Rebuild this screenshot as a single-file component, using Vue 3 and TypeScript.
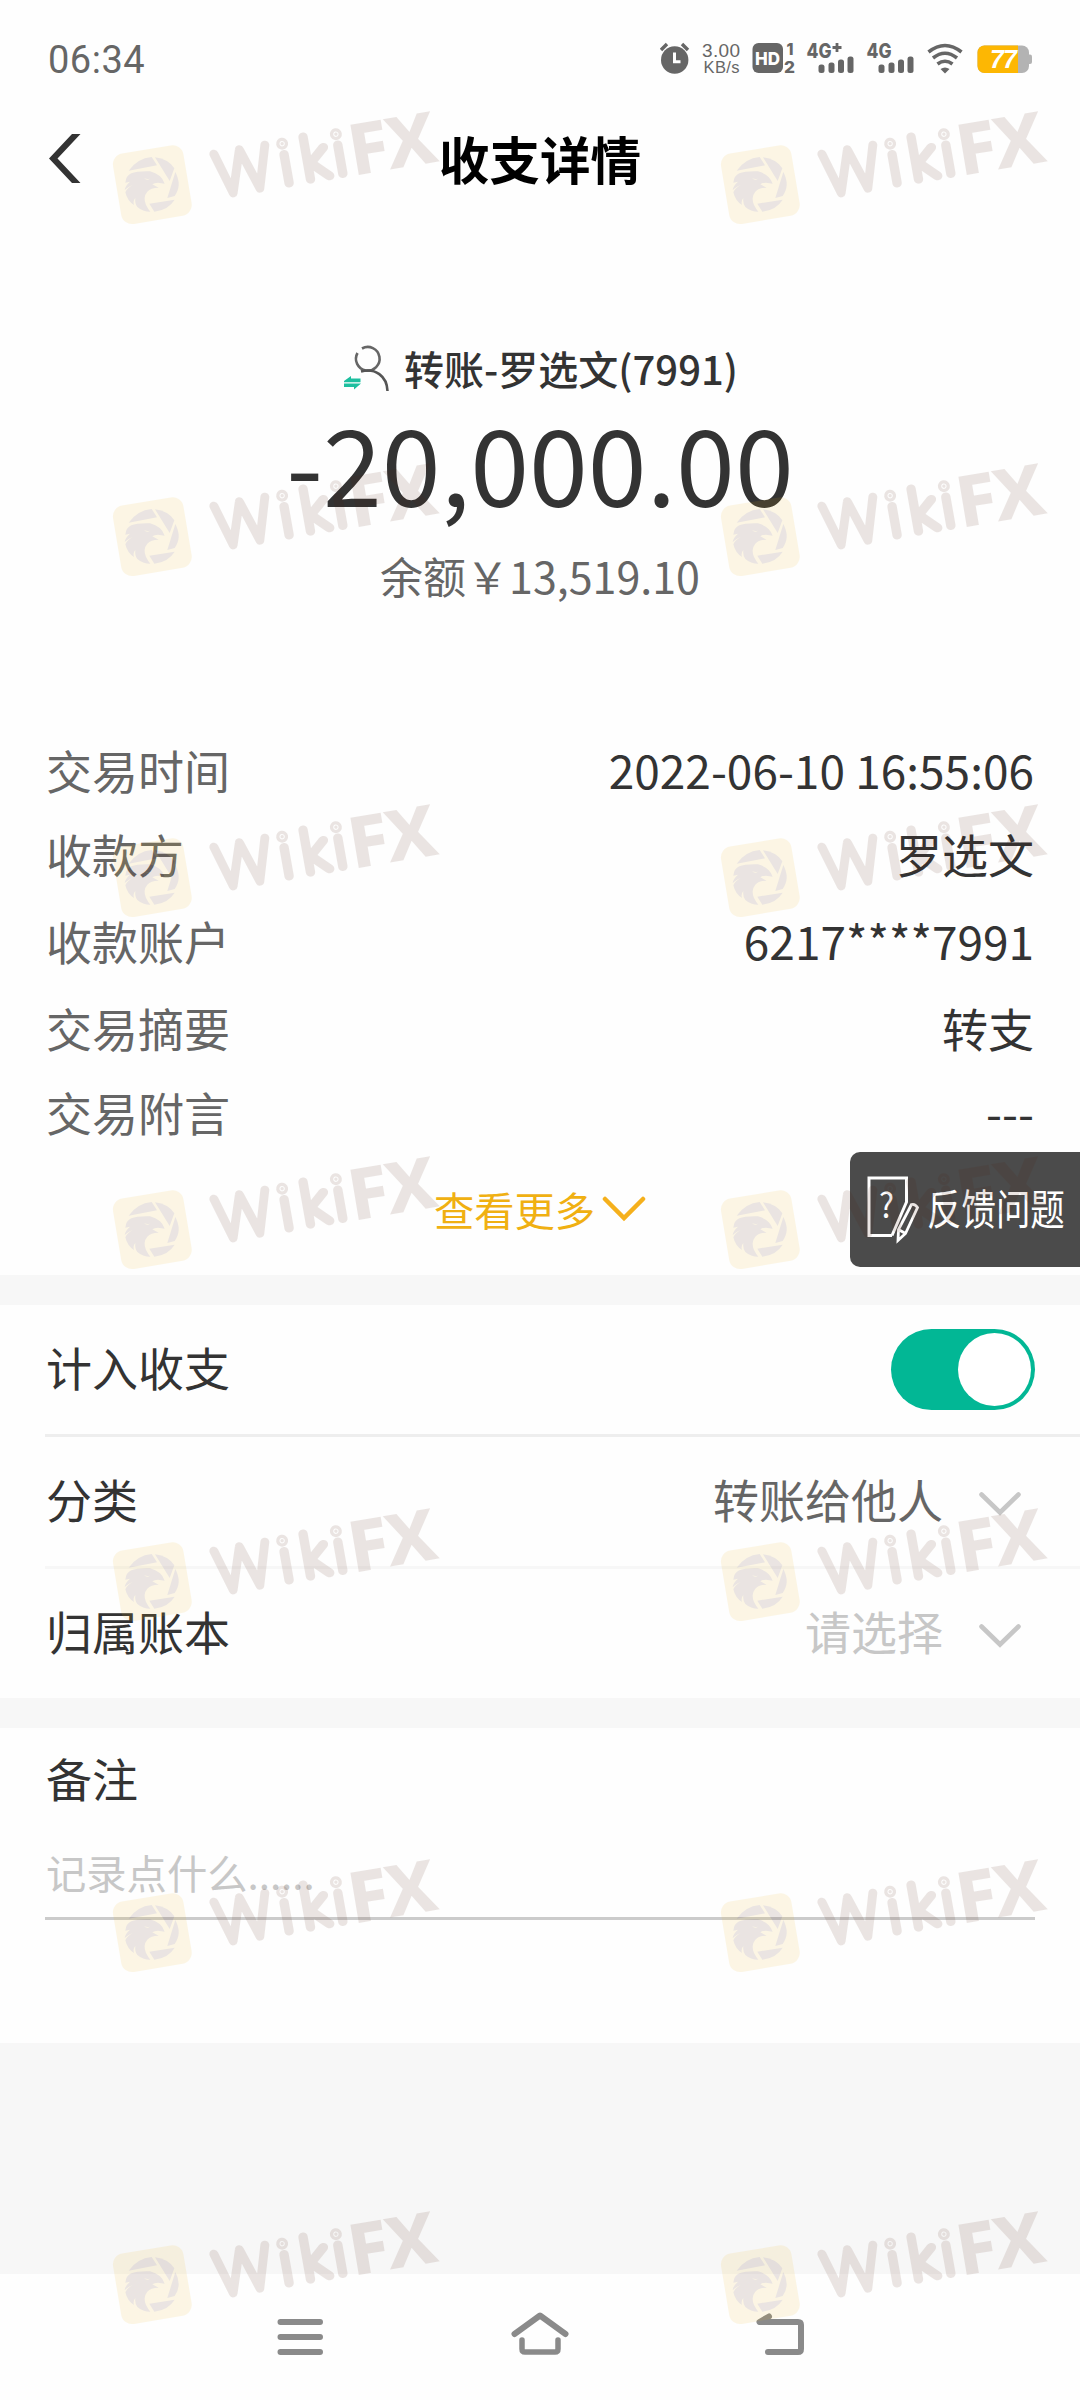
<template>
  <div class="page">
    <div class="status-bar">
      <span class="clock">06:34</span>
      <!-- alarm, speed, network and battery -->
      <svg class="status-icons" viewBox="0 0 400 46" width="400" height="46">
        <g fill="#666">
          <circle cx="14.7" cy="25" r="13.7" />
          <path d="M1 15l6-6M28 15l-6-6" stroke="#666" stroke-width="3.4" />
          <path d="M14.5 17.5v9.3h6" fill="none" stroke="#fff" stroke-width="3" />
          <text x="42" y="21.5" class="speed" textLength="38">3.00</text>
          <text x="43.5" y="37.5" class="unit" textLength="36">KB/s</text>
          <rect x="92.5" y="8" width="30.5" height="30" rx="6" />
          <text x="95" y="29.5" class="hd" textLength="25" lengthAdjust="spacingAndGlyphs">HD</text>
          <text x="126.5" y="20" class="sim" textLength="7" lengthAdjust="spacingAndGlyphs">1</text>
          <text x="124" y="37.5" class="sim" textLength="11" lengthAdjust="spacingAndGlyphs">2</text>
          <text x="146.5" y="22.5" class="net" textLength="25" lengthAdjust="spacingAndGlyphs">4G</text>
          <path d="M177 8v9M172.5 12.5h9" stroke="#666" stroke-width="2.8" />
          <text x="206.5" y="22.5" class="net" textLength="25" lengthAdjust="spacingAndGlyphs">4G</text>
          <g v-for="x in [158.5, 218.5]" :key="x">
            <rect :x="x" y="29.5" width="6" height="8.5" rx="2.5" />
            <rect :x="x + 10" y="27.5" width="6" height="10.5" rx="2.5" />
            <rect :x="x + 19.5" y="24.5" width="6" height="13.5" rx="2.5" />
            <rect :x="x + 29" y="21.5" width="6" height="16.5" rx="2.5" />
          </g>
          <path d="M280.5 34q4.5-3 9 0l-4.5 4.5z" />
          <g fill="none" stroke="#666" stroke-width="3.6">
            <path d="M268.5 17q16.5-13 33 0" />
            <path d="M273 23q12-9.5 24 0" />
            <path d="M277.5 29q7.5-5.5 15 0" />
          </g>
        </g>
        <rect x="317.5" y="10.5" width="51.5" height="27.5" rx="7" fill="#b3b3b3" />
        <rect x="367" y="19.5" width="5" height="9.5" rx="2" fill="#b3b3b3" />
        <path d="M324.5 10.5H358V38h-33.5a7 7 0 0 1-7-7V17.5a7 7 0 0 1 7-7z" fill="#fdb703" />
        <text x="330" y="33" class="level" textLength="27">77</text>
      </svg>
    </div>

    <header class="nav">
      <svg class="back" viewBox="0 0 32 50" width="32" height="50">
        <path d="M23 0h8.5L8.5 24.500 31.5 49H23L0 24.500z" fill="#333" />
      </svg>
      <h1>收支详情</h1>
    </header>

    <section class="summary">
      <div class="payee">
        <svg viewBox="0 0 46 48" width="46" height="48" fill="none">
          <path d="M18 4.500a11.800 11.800 0 1 1-4.500 4.500" stroke="#666" stroke-width="2.6" />
          <path d="M17 27.500C31 23.500 43 32 43.500 47" stroke="#555" stroke-width="2.6" />
          <path d="M0 37l7-5v2.500h9.500v3.800H0zM17 39.500l-7 6V43H0v-3.500z" fill="#1dbf9f" />
        </svg>
        <span>转账-罗选文(7991)</span>
      </div>
      <div class="amount">-20,000.00</div>
      <div class="balance">余额￥13,519.10</div>
    </section>

    <section class="details">
      <div v-for="item in details" :key="item.label" class="detail">
        <span class="label">{{ item.label }}</span>
        <span>{{ item.value }}</span>
      </div>
      <div class="more">
        <span>查看更多</span>
        <svg viewBox="0 0 44 26" width="44" height="26" fill="none">
          <path d="M3 3l19 19L41 3" stroke="#f5b01c" stroke-width="4.5" stroke-linecap="round" />
        </svg>
      </div>
      <div class="feedback">
        <svg viewBox="0 0 54 68" width="54" height="68" fill="none" stroke="#fff" stroke-width="3">
          <path d="M25 59.500H2V2h37.500v24L25 59.500" />
          <path d="M44.500 28.500L31.500 53.500 31 64.500l7.500-7L50.500 31.500q-2.500-4-6-3zM31.500 53.500l7 4" stroke-width="2.8" />
          <text x="12" y="42" class="mark" textLength="15" lengthAdjust="spacingAndGlyphs">?</text>
        </svg>
        <span>反馈问题</span>
      </div>
    </section>

    <section class="settings">
      <div class="setting">
        <span class="name">计入收支</span>
        <button class="toggle" :class="{ on: counted }" @click="counted = !counted"></button>
      </div>
      <div v-for="row in pickers" :key="row.label" class="setting">
        <span class="name">{{ row.label }}</span>
        <div class="picker">
          <span class="choice" :class="{ empty: row.empty }">{{ row.value }}</span>
          <svg viewBox="0 0 42 25" width="42" height="25" fill="none">
            <path d="M2.500 2.500L21 20.500l18.500-18" stroke="#c7c7c7" stroke-width="4.6" stroke-linecap="round" />
          </svg>
        </div>
      </div>
    </section>

    <section class="remark">
      <div class="remark-title">备注</div>
      <div class="remark-input">记录点什么......</div>
    </section>

    <footer class="system-nav">
      <svg viewBox="0 0 680 60" width="680" height="60" fill="none" stroke="#8a8a8a" stroke-width="6" stroke-linecap="round" stroke-linejoin="round">
        <path d="M80.500 18h39.500M80.500 33h39.500M80.500 48h39.500" />
        <path d="M314.500 30L340 11.500 365.500 30" />
        <path d="M322 36v9q0 3 3 3h30q3 0 3-3v-9" stroke-width="5.5" />
        <path d="M569 12.500L559.500 18H598q3 0 3 3v24q0 3-3 3h-30" />
      </svg>
    </footer>

    <svg
      v-for="mark in marks"
      :key="mark.x + '-' + mark.y"
      class="watermark"
      :style="{ left: mark.x + 'px', top: mark.y + 'px' }"
      viewBox="330 260 1000 370"
      width="333.33"
      height="123.33"
    >
      <rect x="350" y="386" width="214" height="214" rx="33" fill="#edb61c" transform="rotate(-9.5 457 493)" />
      <g fill="#501e0a">
        <path d="M386 451Q412 414 455 410L471 435z" />
        <path d="M465 411Q505 416 523 444L509 482z" />
        <path d="M526 455Q547 495 524 527L502 533z" />
        <path d="M448 550L524 538Q505 569 463 574z" />
        <path d="M376 487Q378 466 394 459 410 452 450 453 485 462 494 490L474 487Q463 487 457 492 466 497 476 502 452 502 442 514 428 530 438 554 444 566 451 574 428 574 412 560 404 550 406 533 398 542 402 554 382 542 376 516 382 502 398 494 380 502 374 510 374 498 390 484z" />
        <path d="M432 473q8 5 18 2-10 7-18-2z" fill="#edb61c" />
        <text class="brand" y="525" transform="rotate(-10 659 525)">
          <tspan x="657" textLength="168" lengthAdjust="spacingAndGlyphs">W</tspan><tspan x="852">i</tspan><tspan x="918">k</tspan><tspan x="1016">i</tspan>
        </text>
        <text x="1060" y="464" class="brand-end" textLength="258" lengthAdjust="spacingAndGlyphs" transform="rotate(-9.5 1060 464)">FX</text>
      </g>
    </svg>
  </div>
</template>

<script setup lang="ts">
import { ref, Ref } from "vue";

interface Detail {
  label: string;
  value: string;
}

interface Picker extends Detail {
  empty: boolean;
}

const details: Detail[] = [
  { label: "交易时间", value: "2022-06-10 16:55:06" },
  { label: "收款方", value: "罗选文" },
  { label: "收款账户", value: "6217****7991" },
  { label: "交易摘要", value: "转支" },
  { label: "交易附言", value: "---" },
];

const pickers: Picker[] = [
  { label: "分类", value: "转账给他人", empty: false },
  { label: "归属账本", value: "请选择", empty: true },
];

const counted: Ref<boolean> = ref(true);

const marks = [107, 459, 800, 1152, 1504, 1855, 2207].flatMap((y) => [
  { x: 110, y },
  { x: 718, y },
]);
</script>

<style>
body {
  margin: 0;
}
</style>

<style scoped>
.page {
  position: relative;
  width: 1080px;
  height: 2400px;
  overflow: hidden;
  display: flex;
  flex-direction: column;
  background-color: #f7f7f7;
  color: #333;
  font-family: "Noto Sans CJK SC", sans-serif;
  font-size: 46px;
  line-height: 1;
}

.status-bar {
  height: 116px;
  box-sizing: border-box;
  padding: 35px 20px 0 48px;
  display: flex;
  justify-content: space-between;
  background-color: #fefefe;
}

.clock {
  margin-top: 6px;
  font-family: Roboto, sans-serif;
  font-size: 38px;
  letter-spacing: 0.5px;
  color: #666;
}

.status-icons {
  font-family: "Liberation Sans", sans-serif;
}

.speed {
  font-size: 19px;
}

.unit {
  font-size: 16.5px;
}

.hd {
  font-family: Inter, sans-serif;
  font-size: 18px;
  font-weight: 800;
  fill: #fff;
}

.sim {
  font-family: Inter, sans-serif;
  font-size: 16.5px;
  font-weight: 800;
}

.net {
  font-family: Inter, sans-serif;
  font-size: 20px;
  font-weight: 800;
}

.level {
  font-size: 25px;
  font-weight: bold;
  font-style: italic;
  fill: #fff;
}

.nav {
  height: 86px;
  padding: 0 48px;
  display: flex;
  align-items: center;
  background-color: #fefefe;
}

.back {
  margin: 0 -33px 0 1px;
}

h1 {
  flex: 1;
  margin: -2px 0 0;
  color: #000;
  font-size: 50.6px;
  font-weight: bold;
  text-align: center;
}

.summary {
  height: 525px;
  display: flex;
  flex-direction: column;
  align-items: center;
  background-color: #fefefe;
}

.payee {
  margin: 139px 0 0 2px;
  height: 54px;
  display: flex;
  align-items: center;
  gap: 14px;
  font-size: 40px;
  font-weight: 500;
}

.amount {
  margin-top: 13px;
  font-size: 106px;
}

.balance {
  margin-top: 40px;
  color: #666;
  font-size: 43px;
}

.details {
  position: relative;
  height: 548px;
  padding: 0 46px;
  background-color: #fefefe;
}

.detail {
  height: 84px;
  display: flex;
  justify-content: space-between;
  align-items: center;
}

.detail:nth-child(3) {
  height: 90px;
}

.label {
  color: #666;
}

.more {
  margin-top: 23px;
  height: 66px;
  display: flex;
  justify-content: center;
  align-items: center;
  gap: 8px;
  color: #f0b012;
  font-size: 40.3px;
}

.more svg {
  margin-left: -1px;
}

.feedback {
  position: absolute;
  right: 0;
  top: 425px;
  width: 230px;
  height: 115px;
  box-sizing: border-box;
  padding-left: 17px;
  display: flex;
  align-items: center;
  gap: 6px;
  border-radius: 10px 0 0 10px;
  background-color: #4b4b4b;
  color: #fff;
  font-size: 42px;
}

.feedback span {
  width: 137px;
  margin-top: -6px;
  white-space: nowrap;
  transform: scaleX(0.82);
  transform-origin: left;
}

.mark {
  font-size: 34px;
  fill: #fff;
  stroke: none;
}

.settings {
  margin: 30px 0;
  padding-left: 45px;
  background-color: #fefefe;
}

.setting {
  height: 129px;
  padding-right: 45px;
  display: flex;
  justify-content: space-between;
  align-items: center;
  border-bottom: 3px solid #f7f7f7;
}

.setting:first-child {
  border-bottom-color: #eee;
}

.setting:last-child {
  border-bottom: none;
}

.name {
  margin: -8px 0 0 1px;
}

.toggle {
  width: 144px;
  height: 81px;
  padding: 4px;
  border: none;
  border-radius: 41px;
  background-color: #ccc;
  cursor: pointer;
}

.toggle::after {
  content: "";
  display: block;
  width: 73px;
  height: 73px;
  border-radius: 50%;
  background-color: #fff;
}

.toggle.on {
  background-color: #02b795;
}

.toggle.on::after {
  margin-left: auto;
}

.picker {
  margin-right: 14px;
  display: flex;
  align-items: center;
  gap: 36px;
  color: #666;
}

.picker svg {
  margin-top: 5px;
}

.choice {
  margin-top: -8px;
}

.empty {
  color: #c7c7c7;
}

.remark {
  height: 315px;
  box-sizing: border-box;
  padding: 26px 45px 0;
  background-color: #fefefe;
}

.remark-title {
  padding-left: 1px;
}

.remark-input {
  margin-top: 41px;
  height: 65px;
  padding: 11px 1px 0;
  border-bottom: 3px solid #cbcbcb;
  color: #c7c7c7;
  font-size: 40.3px;
}

.system-nav {
  height: 126px;
  margin-top: auto;
  padding-top: 30px;
  box-sizing: border-box;
  text-align: center;
  background-color: #fefefe;
}

.watermark {
  position: absolute;
  overflow: visible;
  opacity: 0.11;
  pointer-events: none;
}

.brand {
  font-family: Lato, sans-serif;
  font-size: 179px;
  font-weight: 100;
  stroke: #501e0a;
  stroke-width: 26;
  stroke-linejoin: round;
}

.brand-end {
  font-family: "Open Sans", sans-serif;
  font-size: 207px;
  font-weight: bold;
  stroke: #501e0a;
  stroke-width: 5;
}
</style>
